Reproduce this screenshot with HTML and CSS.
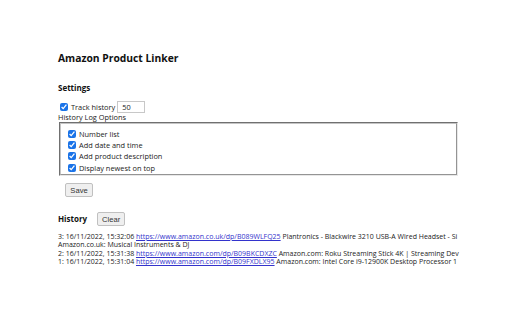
FILE: index.html
```html
<!DOCTYPE html>
<html>
<head>
<meta charset="utf-8">
<link rel="stylesheet" href="styles.css">
</head>
<body>
<div class="page">
  <h1 class="title">Amazon Product Linker</h1>
  <h2 class="section">Settings</h2>
  <div class="track-row">
    <input type="checkbox" class="cb" checked>
    <span class="lbl">Track history</span>
    <input type="text" class="num" value="50">
  </div>
  <div class="opt-label">History Log Options</div>
  <fieldset class="opts">
    <label class="opt"><input type="checkbox" class="cb" checked><span>Number list</span></label>
    <label class="opt"><input type="checkbox" class="cb" checked><span>Add date and time</span></label>
    <label class="opt"><input type="checkbox" class="cb" checked><span>Add product description</span></label>
    <label class="opt"><input type="checkbox" class="cb" checked><span>Display newest on top</span></label>
  </fieldset>
  <button class="btn save">Save</button>
  <div class="hist-head">
    <h2 class="section inline">History</h2>
    <button class="btn">Clear</button>
  </div>
  <div class="history">
    <div class="entry">3: 16/11/2022, 15:32:06 <a href="#">https://www.amazon.co.uk/dp/B089WLFQ25</a> Plantronics - Blackwire 3210 USB-A Wired Headset - Si</div>
    <div class="entry">Amazon.co.uk: Musical Instruments &amp; DJ</div>
    <div class="entry">2: 16/11/2022, 15:31:38 <a href="#">https://www.amazon.com/dp/B09BKCDXZC</a> Amazon.com: Roku Streaming Stick 4K | Streaming Dev</div>
    <div class="entry">1: 16/11/2022, 15:31:04 <a href="#">https://www.amazon.com/dp/B09FXDLX95</a> Amazon.com: Intel Core i9-12900K Desktop Processor 1</div>
  </div>
</div>
</body>
</html>
```
FILE: styles.css
```css
html, body {
  margin: 0;
  padding: 0;
  background: #ffffff;
  overflow: hidden;
}
.page {
  width: 512px;
  height: 320px;
  padding: 50px 0 0 58px;
  box-sizing: border-box;
  font-family: "Open Sans", "Noto Sans", sans-serif;
  color: #222;
  font-size: 7.4px;
}
.title {
  margin: 0;
  font-size: 10.3px;
  line-height: 16px;
  font-weight: 700;
  color: #111;
}
.section {
  margin: 17px 0 0 0;
  font-size: 8px;
  line-height: 10px;
  font-weight: 700;
  color: #111;
}
.section.inline { margin: 0; }
.track-row {
  display: flex;
  align-items: center;
  margin-top: 7px;
  height: 14px;
  padding-left: 2px;
}
.cb {
  width: 8px;
  height: 8px;
  margin: 0 3px 0 0;
  accent-color: #1a73e8;
}
.lbl { margin-right: 2px; }
.num {
  width: 28px;
  height: 12px;
  box-sizing: border-box;
  border: 1px solid #c8c8c8;
  padding: 0 0 0 4px;
  font-family: "Open Sans", sans-serif;
  font-size: 7.4px;
  color: #222;
  outline: none;
}
.opt-label {
  margin-top: -1px;
  line-height: 9px;
}
.opts {
  margin: 0 54px 0 1px;
  padding: 4.5px 0 4px 7px;
  border: 2px groove #d0d0d0;
  border-color: #c4c4c4 #e8e8e8 #e8e8e8 #c4c4c4;
  display: flex;
  flex-direction: column;
  height: 54px;
  box-sizing: border-box;
}
.opt {
  display: flex;
  align-items: center;
  height: 11.2px;
  flex: none;
}
.btn {
  font-family: "Liberation Sans", Arial, sans-serif;
  font-size: 7.6px;
  color: #333;
  background: #efefef;
  border: 1px solid #c0c0c0;
  border-radius: 2px;
  height: 14px;
  width: 28px;
  padding: 0;
}
.save {
  display: block;
  margin: 7px 0 0 7px;
}
.hist-head {
  display: flex;
  align-items: center;
  gap: 10px;
  margin-top: 15px;
}
.history {
  margin-top: 7px;
  width: 402px;
}
.entry {
  white-space: nowrap;
  font-size: 7px;
  line-height: 8.4px;
  color: #222;
}
.entry a {
  color: #3333cc;
  text-decoration: underline;
}
```
